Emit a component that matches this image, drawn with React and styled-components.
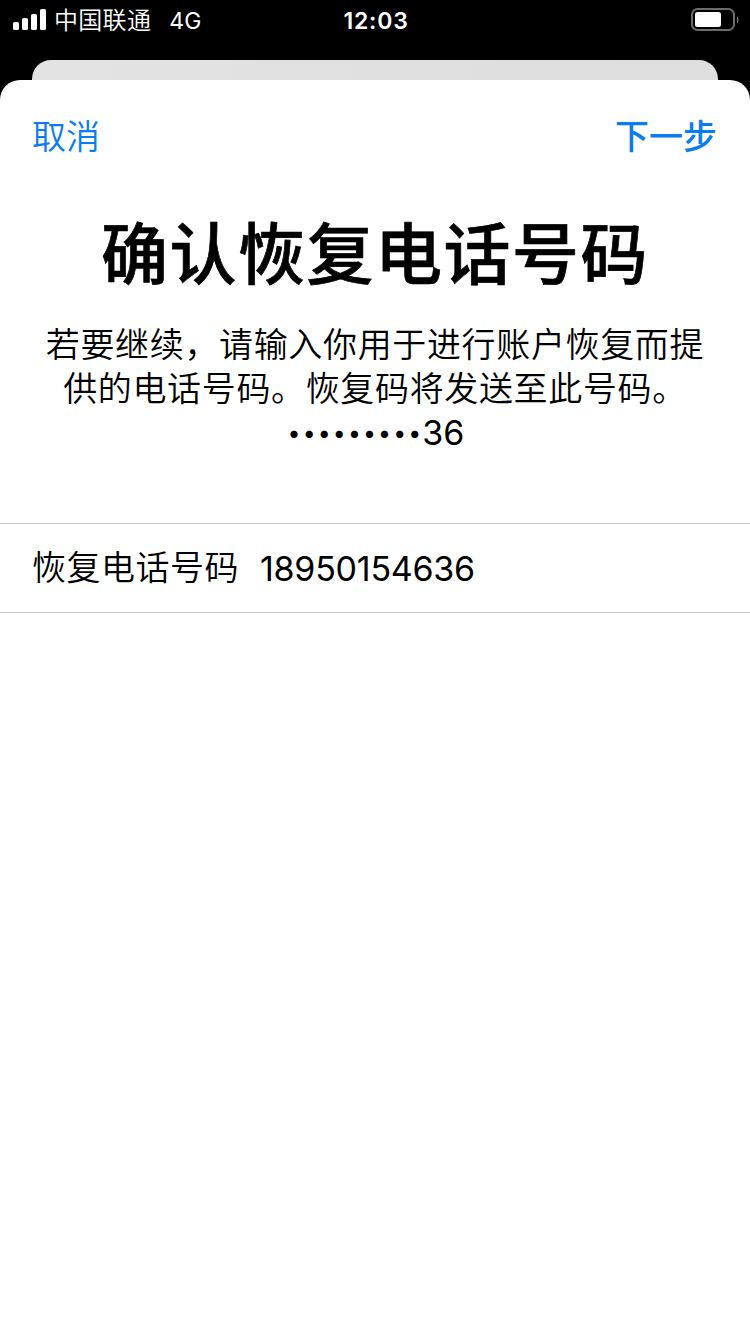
import React from 'react';
import styled, { createGlobalStyle } from 'styled-components';

const GlobalStyle = createGlobalStyle`
  * {
    box-sizing: border-box;
  }
  body {
    margin: 0;
    background: #000;
    color: #000;
    font-family: Inter, 'Noto Sans CJK SC', sans-serif;
  }
`;

const Screen = styled.div`
  width: 750px;
  height: 1334px;
  display: flex;
  flex-direction: column;
  overflow: hidden;
  background: #000;
`;

const StatusBar = styled.header`
  height: 60px;
  padding: 0 11px 20px 13px;
  display: grid;
  grid-template-columns: 1fr auto 1fr;
  align-items: center;
  color: #fff;
  line-height: 38px;
`;

const StatusLeft = styled.div`
  display: flex;
  align-items: center;
`;

const Carrier = styled.span`
  margin-left: 7px;
  padding-top: 2px;
  font-size: 24px;
  font-weight: 350;
  letter-spacing: 0.3px;
`;

const Network = styled.span`
  margin-left: 18px;
  padding-top: 2px;
  font-size: 23px;
  letter-spacing: 0.2px;
`;

const Clock = styled.time`
  padding-top: 2px;
  font-size: 23px;
  font-weight: 600;
  letter-spacing: 0.8px;
`;

const StatusRight = styled.div`
  display: flex;
  justify-content: flex-end;
`;

const BackSheet = styled.div`
  height: 20px;
  margin: 0 32px;
  border-radius: 19px 19px 0 0;
  background: linear-gradient(90deg, #e3e3e3, #dedede);
`;

const Sheet = styled.main`
  flex: 1;
  border-radius: 20px 20px 0 0;
  background: #fff;
`;

const NavBar = styled.nav`
  height: 114px;
  padding: 0 33px 0 32px;
  display: flex;
  align-items: center;
  justify-content: space-between;
`;

const NavButton = styled.button`
  padding: 0;
  border: 0;
  background: none;
  color: #087cf0;
  font-family: inherit;
  font-size: 34px;
  font-weight: ${props => (props.$primary ? 500 : 350)};
  line-height: 48px;
`;

const Title = styled.h1`
  height: 96px;
  margin: 13px 0 0;
  font-size: 67px;
  font-weight: 500;
  letter-spacing: 1.5px;
  line-height: 96px;
  text-align: center;
  -webkit-text-stroke: 0.7px #000;
`;

const Description = styled.div`
  margin-top: 20px;
  font-size: 34px;
  font-weight: 350;
  letter-spacing: 0.65px;
  line-height: 44px;
  text-align: center;
`;

const Line = styled.div`
  height: 44px;
  white-space: nowrap;
`;

const MaskedLine = styled(Line)`
  display: flex;
  align-items: center;
  justify-content: center;
  padding-left: 2px;
  font-weight: 400;
  letter-spacing: 0;
`;

const Dots = styled.span`
  margin-right: -1px;
  font-size: 23px;
  letter-spacing: 2.15px;
`;

const Field = styled.label`
  height: 90px;
  margin-top: 68px;
  padding: 0 32px;
  display: flex;
  align-items: center;
  border-top: 1px solid #c3c3c3;
  border-bottom: 1px solid #c3c3c3;
  font-size: 34px;
  line-height: 48px;
`;

const FieldLabel = styled.span`
  width: 228px;
  font-weight: 350;
  letter-spacing: 0.5px;
`;

const FieldValue = styled.span`
  padding-top: 2px;
  letter-spacing: -0.25px;
`;

function Signal() {
  return (
    <svg width="34" height="22" viewBox="0 0 34 22" fill="#fff">
      <rect x="0" y="13" width="6" height="8" rx="1.6" />
      <rect x="9" y="9" width="6" height="12" rx="1.6" />
      <rect x="18" y="5" width="6" height="16" rx="1.6" />
      <rect x="27" y="0" width="6" height="21" rx="1.6" />
    </svg>
  );
}

function Battery() {
  return (
    <svg width="48" height="24" viewBox="0 0 48 24">
      <rect x="1" y="1" width="42" height="21" rx="5.5" fill="none" stroke="#6c6c6c" strokeWidth="2" />
      <rect x="4" y="4" width="26" height="15" rx="2.5" fill="#fff" />
      <path d="M46 8.2c2 1 2 6 0 7z" fill="#777" />
    </svg>
  );
}

export default function App() {
  return (
    <Screen>
      <GlobalStyle />
      <StatusBar>
        <StatusLeft>
          <Signal />
          <Carrier>中国联通</Carrier>
          <Network>4G</Network>
        </StatusLeft>
        <Clock>12:03</Clock>
        <StatusRight>
          <Battery />
        </StatusRight>
      </StatusBar>
      <BackSheet />
      <Sheet>
        <NavBar>
          <NavButton>取消</NavButton>
          <NavButton $primary>下一步</NavButton>
        </NavBar>
        <Title>确认恢复电话号码</Title>
        <Description>
          <Line>若要继续，请输入你用于进行账户恢复而提</Line>
          <Line>供的电话号码。恢复码将发送至此号码。</Line>
          <MaskedLine>
            <Dots>•••••••••</Dots>36
          </MaskedLine>
        </Description>
        <Field>
          <FieldLabel>恢复电话号码</FieldLabel>
          <FieldValue>18950154636</FieldValue>
        </Field>
      </Sheet>
    </Screen>
  );
}
